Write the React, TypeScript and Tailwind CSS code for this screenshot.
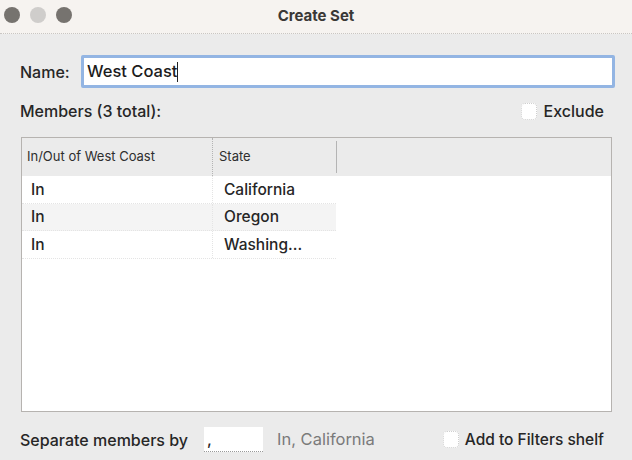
import { FunctionComponent } from "react";

const rows = [
  { inOut: "In", state: "California", shade: false },
  { inOut: "In", state: "Oregon", shade: true },
  { inOut: "In", state: "Washing...", shade: false },
];

const Checkbox: FunctionComponent = () => (
  <span className="inline-block w-[16px] h-[17px] rounded-[4px] bg-white border border-dotted border-[#cfcfcf] shrink-0" />
);

const App: FunctionComponent = () => {
  return (
    <div className="w-[632px] h-[460px] overflow-hidden flex flex-col bg-[#ebebeb] text-[#262626] font-['Inter','Liberation_Sans',sans-serif]">
      {/* title bar */}
      <div className="relative h-[34px] shrink-0 flex items-center justify-center bg-[#f6f3f0] border-b border-dotted border-[#c9c6c3]">
        <div className="absolute left-[4px] top-[7px] flex gap-[10px]">
          <span className="w-[16px] h-[16px] rounded-full bg-[#76736f]" />
          <span className="w-[16px] h-[16px] rounded-full bg-[#cfcdcb]" />
          <span className="w-[16px] h-[16px] rounded-full bg-[#76736f]" />
        </div>
        <span className="text-[15px] font-bold text-[#3a3836]">Create Set</span>
      </div>

      <div className="flex flex-col pl-[20px] pr-[17px] font-medium">
        {/* name */}
        <div className="mt-[21px] h-[33px] flex items-center">
          <span className="w-[61px] text-[16px]">Name:</span>
          <div className="flex-1 h-[33px] border-[3px] border-[#93b5e3] rounded-[2px] bg-white flex items-center pl-[3px]">
            <span className="text-[16.5px] text-[#1c1c1c]">West Coast</span>
            <span className="w-[1px] h-[20px] bg-[#222]" />
          </div>
        </div>

        {/* members */}
        <div className="mt-[13px] h-[20px] flex items-center justify-between pr-[11px]">
          <span className="text-[16px]">Members (3 total):</span>
          <div className="flex items-center gap-[7px]">
            <Checkbox />
            <span className="text-[16px]">Exclude</span>
          </div>
        </div>

        {/* table */}
        <div className="mt-[16px] ml-[1px] w-[591px] h-[275px] border border-[#b6b3b0] bg-white flex flex-col">
          <div className="h-[38px] shrink-0 flex bg-[#ebebeb] font-normal">
            <div className="w-[190px] flex items-center pl-[5px] text-[13px] text-[#2e2e2e]">In/Out of West Coast</div>
            <div className="w-[124px] flex items-center pl-[6px] border-l border-dotted border-[#b4b4b4] text-[13px] text-[#2e2e2e]">
              State
            </div>
            <div className="flex-1 border-l border-[#b4b4b4] my-[3px]" />
          </div>
          {rows.map((r) => (
            <div
              key={r.state}
              className={`h-[27.5px] w-[314px] flex border-b border-dotted border-[#e4e4e4] ${r.shade ? "bg-[#f4f4f4]" : "bg-white"}`}
            >
              <div className="w-[190px] flex items-center pl-[9px] text-[15.5px]">{r.inOut}</div>
              <div className="flex-1 flex items-center pl-[11px] border-l border-dotted border-[#e4e4e4] text-[15.5px]">
                {r.state}
              </div>
            </div>
          ))}
        </div>

        {/* bottom */}
        <div className="mt-[15px] h-[25px] flex items-center">
          <span className="text-[16px] w-[184px] whitespace-nowrap">Separate members by</span>
          <div className="w-[59px] h-[25px] bg-white border-b border-dotted border-[#9a9a9a] flex items-center pl-[3px] text-[16px]">
            ,
          </div>
          <span className="ml-[14px] text-[16.5px] text-[#7a7a7a] font-normal">In, California</span>
          <div className="ml-auto flex items-center gap-[6px] pr-[11px]">
            <Checkbox />
            <span className="text-[15.5px]">Add to Filters shelf</span>
          </div>
        </div>
      </div>
    </div>
  );
};

export default App;
